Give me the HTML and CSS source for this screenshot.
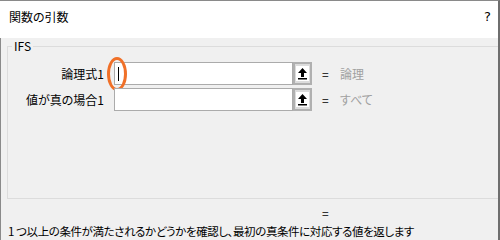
FILE: index.html
```html
<!DOCTYPE html>
<html lang="ja">
<head>
    <meta charset="UTF-8">
    <title>関数の引数</title>
    <link rel="stylesheet" href="styles.css">
</head>
<body>
    <div class="dialog">
        <div class="titlebar">
            <span class="title">関数の引数</span>
            <span class="help">?</span>
        </div>

        <div class="panel">
            <fieldset class="group">
                <legend>IFS</legend>

                <div class="arg">
                    <label class="arg-name">論理式1</label>
                    <div class="arg-input"><span class="caret"></span></div>
                    <span class="ref-btn">
                        <span class="ref-face">
                            <svg width="11" height="13" viewBox="0 0 11 13">
                                <path d="M5.5 1 L10 6 L7 6 L7 10 L4 10 L4 6 L1 6 Z" fill="#000"/>
                                <rect x="1" y="11" width="9" height="1.5" fill="#000"/>
                            </svg>
                        </span>
                    </span>
                    <span class="eq">=</span>
                    <span class="arg-value">論理</span>
                    <!-- highlight ring drawn over the input -->
                    <span class="mark"></span>
                </div>

                <div class="arg">
                    <label class="arg-name">値が真の場合1</label>
                    <div class="arg-input"></div>
                    <span class="ref-btn">
                        <span class="ref-face">
                            <svg width="11" height="13" viewBox="0 0 11 13">
                                <path d="M5.5 1 L10 6 L7 6 L7 10 L4 10 L4 6 L1 6 Z" fill="#000"/>
                                <rect x="1" y="11" width="9" height="1.5" fill="#000"/>
                            </svg>
                        </span>
                    </span>
                    <span class="eq">=</span>
                    <span class="arg-value">すべて</span>
                </div>
            </fieldset>

            <div class="result">=</div>
            <p class="desc">1 つ以上の条件が満たされるかどうかを確認し、最初の真条件に対応する値を返します</p>
        </div>
    </div>
</body>
</html>
```

FILE: styles.css
```css
* { margin: 0; padding: 0; box-sizing: border-box; }

body {
    font-family: "Noto Sans CJK JP", "Noto Sans", sans-serif;
    font-size: 12px;
    font-feature-settings: "palt";
    color: #000;
    background: #fff;
}

.dialog {
    width: 500px;
    height: 240px;
    border-top: 1px solid #8a8a8a;
    border-right: 2px solid #6e6e6e;
    overflow: hidden;
}

/* Title bar */
.titlebar {
    height: 30px;
    display: flex;
    align-items: center;
    justify-content: space-between;
    padding: 0 7px 0 9px;
    background: #fff;
}

.title {
    font-size: 12px;
}

.help {
    font-family: "DejaVu Sans", sans-serif;
    font-size: 13px;
}

.panel {
    height: 209px;
    background: #f0f0f0;
    border-left: 1px solid #8a8a8a;
}

/* Group box */
.group {
    margin: 7px 0 0 6px;
    height: 161px;
    padding: 8px 0 0 0;
    border: 1px solid #dcdcdc;
    border-right: none;
}

.group legend {
    margin-left: 4px;
    padding: 0 2px;
    line-height: 16px;
}

.arg {
    display: flex;
    align-items: center;
    height: 23px;
    margin-bottom: 3px;
    position: relative;
}

.arg-name {
    width: 96px;
    text-align: right;
}

.arg-input {
    width: 179px;
    height: 23px;
    margin-left: 10px;
    background: #fff;
    border: 1px solid #ababab;
    display: flex;
    align-items: center;
    padding-left: 3px;
}

.caret {
    width: 1px;
    height: 14px;
    background: #000;
}

.ref-btn {
    width: 19px;
    height: 23px;
    padding: 2px 1px;
    border: 2px solid #b0b0b0;
    background: #dcdcdc;
    display: flex;
}

.ref-face {
    flex: 1;
    background: #fff;
    display: flex;
    align-items: center;
    justify-content: center;
}

.eq {
    margin-left: 10px;
    width: 18px;
}

.arg-value {
    color: #a0a0a0;
}

/* Annotation ring over the first input */
.mark {
    position: absolute;
    left: 99px;
    top: -5px;
    width: 20px;
    height: 34px;
    border: 3px solid #f07028;
    border-radius: 50%;
}

.result {
    margin: 6px 0 0 321px;
    line-height: 16px;
}

.desc {
    margin: 2px 0 0 7px;
    line-height: 16px;
    font-size: 11.5px;
    letter-spacing: -0.4px;
}
```
